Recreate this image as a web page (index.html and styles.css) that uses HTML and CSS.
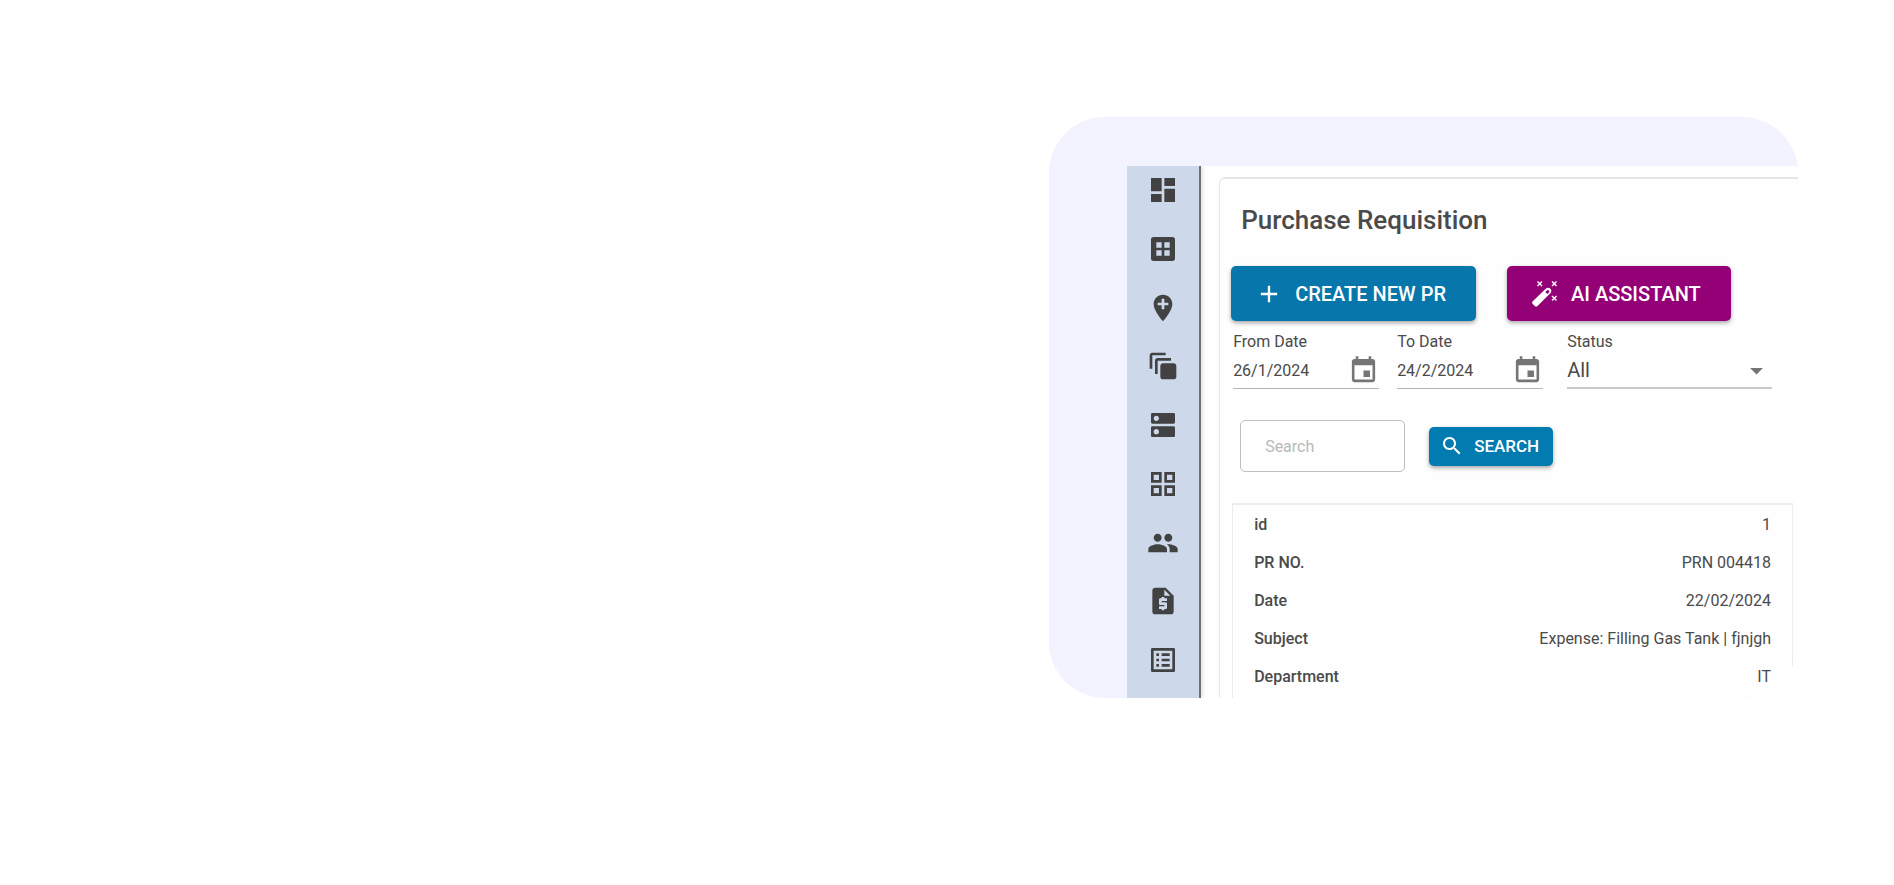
FILE: index.html
```
<!DOCTYPE html>
<html lang="en">
<head>
  <meta charset="UTF-8" />
  <meta name="viewport" content="width=device-width, initial-scale=1.0" />
  <title>Purchase Requisition</title>
  <link rel="stylesheet" href="styles.css">
</head>
<body>
  <section class="showcase">
    <div class="preview">
      <div class="app">
        <nav class="sidebar" aria-label="Main">
          <a href="#" aria-label="Dashboard"><svg viewBox="0 0 24 24"><path d="M3 13h8V3H3v10zm0 8h8v-6H3v6zm10 0h8V11h-8v10zm0-18v6h8V3h-8z"/></svg></a>
          <a href="#" aria-label="Modules"><svg viewBox="0 0 24 24"><path fill-rule="evenodd" d="M5 3h14a2 2 0 0 1 2 2v14a2 2 0 0 1-2 2H5a2 2 0 0 1-2-2V5a2 2 0 0 1 2-2zm2 4v4h4V7H7zm6 0v4h4V7h-4zm-6 6v4h4v-4H7zm6 0v4h4v-4h-4z"/></svg></a>
          <a href="#" aria-label="Locations"><svg viewBox="0 0 24 24"><path d="M12 2C8.140 2 5 5.140 5 9c0 5.250 7 13 7 13s7-7.750 7-13c0-3.860-3.140-7-7-7zm4 8h-3v3h-2v-3H8V8h3V5h2v3h3v2z"/></svg></a>
          <a href="#" aria-label="Collections"><svg viewBox="0 0 24 24"><path d="M14 2H4c-1.100 0-2 .9-2 2v10h2V4h10V2zm4 4H8c-1.100 0-2 .9-2 2v10h2V8h10V6zm2 4h-8c-1.100 0-2 .9-2 2v8c0 1.100.9 2 2 2h8c1.100 0 2-.9 2-2v-8c0-1.100-.9-2-2-2z"/></svg></a>
          <a href="#" aria-label="Storage"><svg viewBox="0 0 24 24"><path d="M20 13H4c-.55 0-1 .45-1 1v6c0 .55.45 1 1 1h16c.55 0 1-.45 1-1v-6c0-.55-.45-1-1-1zM7 19c-1.100 0-2-.9-2-2s.9-2 2-2 2 .9 2 2-.9 2-2 2zM20 3H4c-.55 0-1 .45-1 1v6c0 .55.45 1 1 1h16c.55 0 1-.45 1-1V4c0-.55-.45-1-1-1zM7 9c-1.100 0-2-.9-2-2s.9-2 2-2 2 .9 2 2-.9 2-2 2z"/></svg></a>
          <a href="#" aria-label="Categories"><svg viewBox="0 0 24 24"><path fill-rule="evenodd" d="M3 3v8h8V3H3zm6 6H5V5h4v4zm-6 4v8h8v-8H3zm6 6H5v-4h4v4zm4-16v8h8V3h-8zm6 6h-4V5h4v4zm-6 4v8h8v-8h-8zm6 6h-4v-4h4v4z"/></svg></a>
          <a href="#" aria-label="People"><svg viewBox="0 0 24 24"><path d="M16 11c1.660 0 2.990-1.340 2.990-3S17.660 5 16 5c-1.660 0-3 1.340-3 3s1.340 3 3 3zm-8 0c1.660 0 2.990-1.340 2.990-3S9.660 5 8 5C6.340 5 5 6.340 5 8s1.340 3 3 3zm0 2c-2.330 0-7 1.170-7 3.500V19h14v-2.500c0-2.330-4.670-3.500-7-3.500zm8 0c-.29 0-.62.02-.97.05 1.160.84 1.970 1.970 1.970 3.450V19h6v-2.500c0-2.330-4.670-3.500-7-3.500z"/></svg></a>
          <a href="#" aria-label="Invoices"><svg viewBox="0 0 24 24"><path d="M14 2H6c-1.100 0-2 .9-2 2v16c0 1.100.9 2 2 2h12c1.100 0 2-.9 2-2V8l-6-6zm1 10h-4v1h3c.55 0 1 .45 1 1v3c0 .55-.45 1-1 1h-1v1h-2v-1H9v-2h4v-1h-3c-.55 0-1-.45-1-1v-3c0-.55.45-1 1-1h1V9h2v1h2v2zm-2-4V3.500L17.500 8H13z"/></svg></a>
          <a href="#" aria-label="Reports"><svg viewBox="0 0 24 24"><path fill-rule="evenodd" d="M4 3h16a1 1 0 0 1 1 1v16a1 1 0 0 1-1 1H4a1 1 0 0 1-1-1V4a1 1 0 0 1 1-1zm1 2v14h14V5H5zm2 2h2v2H7V7zm4 0h6v2h-6V7zm-4 4h2v2H7v-2zm4 0h6v2h-6v-2zm-4 4h2v2H7v-2zm4 0h6v2h-6v-2z"/></svg></a>
        </nav>

        <main class="panel">
          <h1>Purchase Requisition</h1>

          <div class="actions">
            <button type="button" class="btn create-btn">
              <svg viewBox="0 0 24 24"><path d="M19 13h-6v6h-2v-6H5v-2h6V5h2v6h6v2z"/></svg>
              CREATE NEW PR
            </button>
            <button type="button" class="btn ai-btn">
              <svg viewBox="0 0 28 28"><path fill-rule="evenodd" d="M1.500 21.500 15 8.500q2.300-1.700 4.300.2t.2 4.300L6.300 26.300q-1.200.9-2.300 0l-2.500-2.500q-.9-1.100 0-2.300zM14.300 12l2.100 2.100 1.600-1.600q.9-1.100 0-2t-2.100-.1z"/><path class="spark" d="m6.500 1.500 4.500 4.500m0-4.500-4.500 4.500m14.500-4.500 4.500 4.500m0-4.500-4.500 4.500m0 10 4.500 4.500m0-4.500-4.500 4.500"/></svg>
              AI ASSISTANT
            </button>
          </div>

          <div class="filters">
            <div class="field">
              <label for="from-date">From Date</label>
              <div class="control">
                <input type="text" id="from-date" value="26/1/2024">
                <button type="button" aria-label="Choose from date"><svg viewBox="0 0 24 24"><path d="M17 12h-5v5h5v-5zM16 1v2H8V1H6v2H5c-1.110 0-2 .9-2 2v14c0 1.100.89 2 2 2h14c1.100 0 2-.9 2-2V5c0-1.100-.9-2-2-2h-1V1h-2zm3 18H5V8h14v11z"/></svg></button>
              </div>
            </div>
            <div class="field">
              <label for="to-date">To Date</label>
              <div class="control">
                <input type="text" id="to-date" value="24/2/2024">
                <button type="button" aria-label="Choose to date"><svg viewBox="0 0 24 24"><path d="M17 12h-5v5h5v-5zM16 1v2H8V1H6v2H5c-1.110 0-2 .9-2 2v14c0 1.100.89 2 2 2h14c1.100 0 2-.9 2-2V5c0-1.100-.9-2-2-2h-1V1h-2zm3 18H5V8h14v11z"/></svg></button>
              </div>
            </div>
            <div class="field status">
              <label for="status">Status</label>
              <div class="control">
                <select id="status">
                  <option>All</option>
                </select>
                <svg viewBox="0 0 24 24"><path d="m7 10 5 5 5-5z"/></svg>
              </div>
            </div>
          </div>

          <form class="search">
            <input type="text" placeholder="Search" aria-label="Search">
            <button type="button" class="btn search-btn">
              <svg viewBox="0 0 24 24"><path d="M15.500 14h-.79l-.28-.27C15.410 12.590 16 11.110 16 9.500 16 5.910 13.090 3 9.500 3S3 5.910 3 9.500 5.910 16 9.500 16c1.610 0 3.090-.59 4.230-1.570l.27.28v.79l5 4.990L20.490 19l-4.990-5zm-6 0C7.010 14 5 11.990 5 9.500S7.010 5 9.500 5 14 7.010 14 9.500 11.990 14 9.500 14z"/></svg>
              SEARCH
            </button>
          </form>

          <div class="record">
            <table>
              <tr><th scope="row">id</th><td>1</td></tr>
              <tr><th scope="row">PR NO.</th><td>PRN 004418</td></tr>
              <tr><th scope="row">Date</th><td>22/02/2024</td></tr>
              <tr><th scope="row">Subject</th><td>Expense: Filling Gas Tank | fjnjgh</td></tr>
              <tr><th scope="row">Department</th><td>IT</td></tr>
            </table>
          </div>
        </main>
      </div>
    </div>
  </section>
</body>
</html>
```
FILE: styles.css
```
* {
  margin: 0;
  padding: 0;
  box-sizing: border-box;
}

body {
  background: #fff;
  font-family: Roboto, 'Liberation Sans', sans-serif;
  font-size: 16px;
  color: #4a4a4a;
}

button, input, select {
  font: inherit;
  color: inherit;
  border: none;
  background: none;
}

button {
  cursor: pointer;
}

svg {
  display: block;
  fill: currentColor;
}

.showcase {
  display: flex;
  justify-content: flex-end;
  padding: 117px 96px;
}

.preview {
  width: 44%;
  min-width: 740px;
  padding: 49px 0 0 78px;
  background: #f3f2ff;
  border-radius: 56px;
  overflow: hidden;
}

.app {
  display: flex;
  background: #fefefe;
  overflow: hidden;
}

.sidebar {
  display: flex;
  flex-direction: column;
  justify-content: space-between;
  align-items: center;
  width: 74px;
  padding: 8px 0 22px;
  background: #cdd8eb;
  border-right: 2px solid #6f7175;
  box-shadow: 1px 0 4px rgba(0, 0, 0, 0.15);
}

.sidebar a {
  color: #424242;
}

.sidebar svg {
  width: 32px;
  height: 32px;
}

.panel {
  flex: 1;
  margin: 11px 0 0 18px;
  padding: 25px 5px 0 11px;
  border: solid #e6e6e6;
  border-width: 2px 0 0 1px;
  border-top-left-radius: 6px;
}

h1 {
  margin: 0 0 30px 10px;
  font-size: 26px;
  font-weight: 500;
  line-height: 32px;
}

.btn {
  display: flex;
  align-items: center;
  color: #fff;
  font-weight: 500;
  border-radius: 5px;
  box-shadow: 0 2px 4px rgba(0, 0, 0, 0.35);
}

.actions {
  display: flex;
  gap: 31px;
}

.actions .btn {
  gap: 12px;
  height: 55px;
  padding: 0 30px 0 24px;
  font-size: 20px;
}

.actions svg {
  width: 28px;
  height: 28px;
}

.create-btn {
  background: #0777ab;
}

.ai-btn {
  background: #940076;
}

.spark {
  fill: none;
  stroke: currentColor;
  stroke-width: 1.4;
}

.filters {
  display: flex;
  gap: 18px;
  padding: 10px 21px 0 2px;
}

.field {
  width: 146px;
}

.field label {
  display: block;
  line-height: 22px;
}

.control {
  display: flex;
  align-items: center;
  justify-content: space-between;
  height: 36px;
  border-bottom: 1px solid #b5b5b5;
}

.control input {
  width: 90px;
}

.control svg {
  width: 31px;
  height: 31px;
  color: #757575;
}

.status {
  flex: 1;
  margin-left: 6px;
}

.status .control {
  border-bottom: 2px solid #c8c8c8;
}

.status select {
  flex: 1;
  appearance: none;
  font-size: 20px;
}

.search {
  display: flex;
  align-items: center;
  gap: 24px;
  padding: 31px 0 31px 9px;
}

.search input {
  width: 165px;
  height: 52px;
  padding: 0 24px;
  border: 1px solid #bdbdbd;
  border-radius: 5px;
}

.search input::placeholder {
  color: #b9b9b9;
}

.search-btn {
  gap: 10px;
  height: 39px;
  padding: 0 14px 0 11px;
  font-size: 17px;
  background: #027bb0;
}

.search-btn svg {
  width: 24px;
  height: 24px;
}

.record {
  margin-left: 1px;
  padding: 0 21px 3px;
  border: solid #ececec;
  border-width: 2px 1px 0;
}

table {
  width: 100%;
  border-collapse: collapse;
}

tr {
  height: 38px;
}

th {
  text-align: left;
  font-weight: 500;
}

td {
  text-align: right;
}
```
